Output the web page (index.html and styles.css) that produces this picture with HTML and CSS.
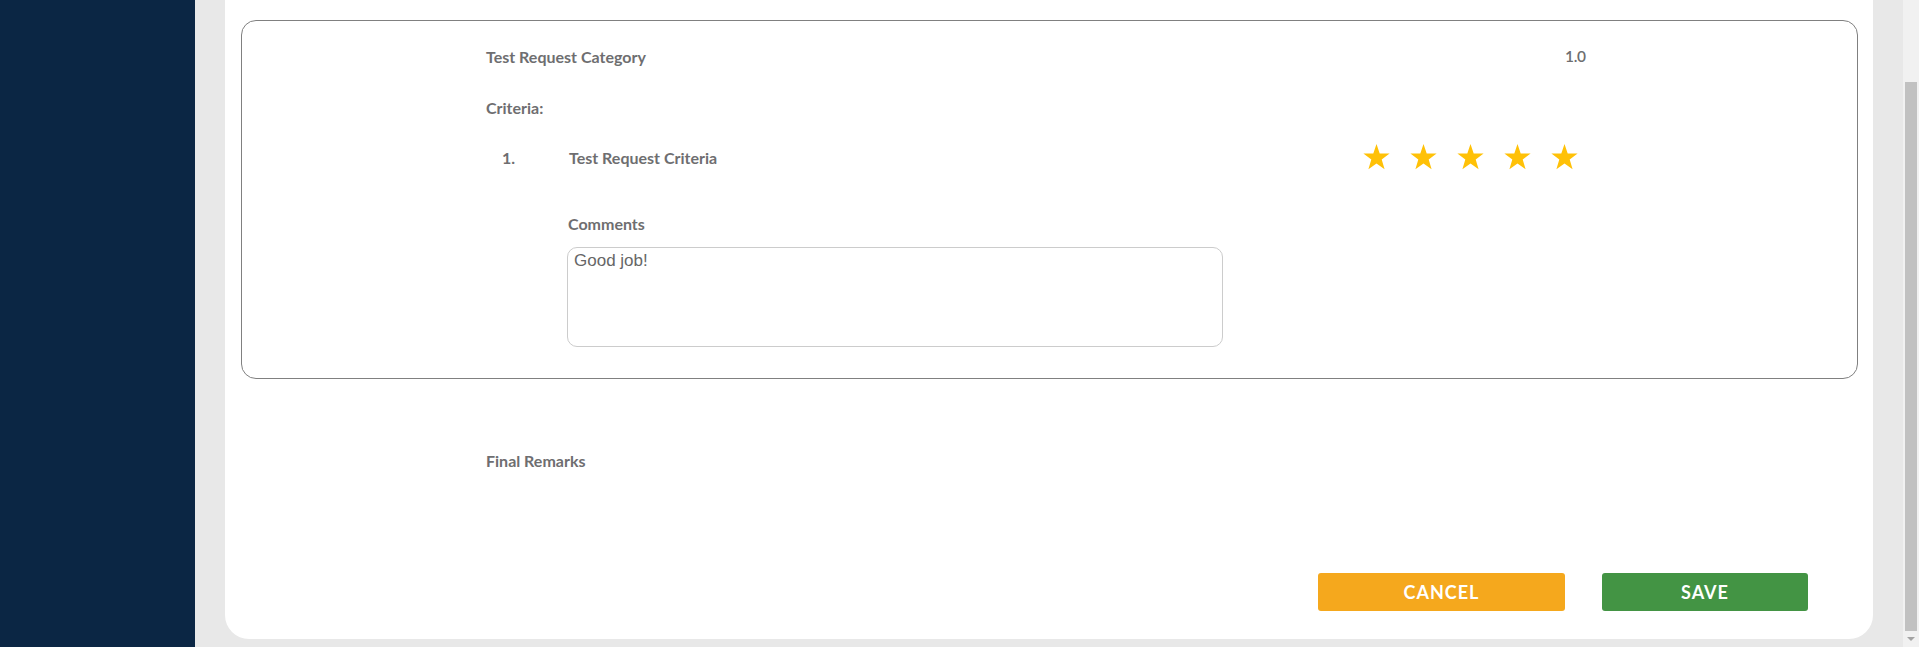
FILE: index.html
```html
<!DOCTYPE html>
<html lang="en">
<head>
<meta charset="utf-8">
<title>Evaluation</title>
<link rel="stylesheet" href="styles.css">
</head>
<body>
<div class="app">
  <aside class="sidebar"></aside>
  <main class="main">
    <section class="card">
      <div class="box">
        <div class="cat-row">
          <span class="cat-label">Test Request Category</span>
          <span class="cat-value">1.0</span>
        </div>
        <div class="crit-heading">Criteria:</div>
        <div class="crit-row">
          <span class="crit-num">1.</span>
          <span class="crit-title">Test Request Criteria</span>
          <div class="stars">
            <svg class="star" viewBox="0 0 27 26"><polygon points="13.5,0 16.7,9.4 26.6,9.6 18.7,15.6 21.6,25.2 13.5,19.4 5.4,25.2 8.3,15.6 0.4,9.6 10.3,9.4"/></svg>
            <svg class="star" viewBox="0 0 27 26"><polygon points="13.5,0 16.7,9.4 26.6,9.6 18.7,15.6 21.6,25.2 13.5,19.4 5.4,25.2 8.3,15.6 0.4,9.6 10.3,9.4"/></svg>
            <svg class="star" viewBox="0 0 27 26"><polygon points="13.5,0 16.7,9.4 26.6,9.6 18.7,15.6 21.6,25.2 13.5,19.4 5.4,25.2 8.3,15.6 0.4,9.6 10.3,9.4"/></svg>
            <svg class="star" viewBox="0 0 27 26"><polygon points="13.5,0 16.7,9.4 26.6,9.6 18.7,15.6 21.6,25.2 13.5,19.4 5.4,25.2 8.3,15.6 0.4,9.6 10.3,9.4"/></svg>
            <svg class="star" viewBox="0 0 27 26"><polygon points="13.5,0 16.7,9.4 26.6,9.6 18.7,15.6 21.6,25.2 13.5,19.4 5.4,25.2 8.3,15.6 0.4,9.6 10.3,9.4"/></svg>
          </div>
        </div>
        <div class="comments">
          <label class="comments-label" for="c1">Comments</label>
          <textarea id="c1" class="comments-input">Good job!</textarea>
        </div>
      </div>
      <div class="final-label">Final Remarks</div>
      <div class="actions">
        <button class="btn btn-cancel">CANCEL</button>
        <button class="btn btn-save">SAVE</button>
      </div>
    </section>
  </main>
  <div class="scrollbar">
    <div class="scroll-track"><div class="scroll-thumb"></div></div>
    <div class="scroll-arrow"></div>
  </div>
</div>
</body>
</html>
```

FILE: styles.css
```css
* { box-sizing: border-box; }
html, body { margin: 0; padding: 0; }
body {
  font-family: "Lato", "Noto Sans", sans-serif;
  color: #6e6e70;
  overflow: hidden;
}
.app {
  display: flex;
  height: 647px;
}
.sidebar {
  width: 195px;
  flex: none;
  background: #0b2644;
}
.main {
  flex: 1;
  background: #e8e8e8;
  padding: 0 30px 8px 30px;
}
.card {
  background: #ffffff;
  height: 639px;
  border-radius: 0 0 24px 24px;
  padding: 20px 15px 28px 16px;
  display: flex;
  flex-direction: column;
}
.box {
  height: 359px;
  border: 1px solid #808080;
  border-radius: 15px;
  padding: 25px 0 0 244px;
}
.label-text {
  font-size: 16px;
}
.cat-row {
  display: flex;
  height: 20px;
  align-items: center;
  font-size: 16px;
  font-weight: 700;
}
.cat-label { width: 1079px; }
.cat-value { font-weight: 600; font-size: 15.5px; letter-spacing: -0.3px; }
.crit-heading {
  margin-top: 32px;
  height: 20px;
  line-height: 20px;
  font-size: 16px;
  font-weight: 700;
}
.crit-row {
  margin-top: 26px;
  display: flex;
  align-items: center;
  height: 26px;
  font-size: 16px;
  font-weight: 700;
}
.crit-num { width: 83px; padding-left: 16px; }
.crit-title { width: 794px; }
.stars { display: flex; gap: 20px; }
.star { width: 27px; height: 26px; fill: #ffc107; display: block; }
.comments {
  margin-top: 44px;
  margin-left: 81px;
  display: flex;
  flex-direction: column;
}
.comments-label {
  height: 20px;
  line-height: 20px;
  font-size: 16px;
  font-weight: 700;
  margin-left: 1px;
}
.comments-input {
  margin-top: 13px;
  width: 656px;
  height: 100px;
  border: 1px solid #cccccc;
  border-radius: 10px;
  padding: 3px 6px;
  font-family: "Liberation Sans", Arial, sans-serif;
  font-size: 17px;
  color: #666666;
  resize: none;
  outline: none;
}
.final-label {
  margin-top: 72px;
  margin-left: 245px;
  height: 20px;
  line-height: 20px;
  font-size: 16px;
  font-weight: 700;
}
.actions {
  margin-top: auto;
  display: flex;
  justify-content: flex-end;
  gap: 37px;
  padding-right: 50px;
}
.btn {
  height: 38px;
  border: none;
  border-radius: 3px;
  color: #ffffff;
  font-family: "Lato", "Noto Sans", sans-serif;
  font-weight: 700;
  font-size: 18px;
  letter-spacing: 1px;
  padding: 0;
}
.btn-cancel { width: 247px; background: #f5a81d; }
.btn-save { width: 206px; background: #439444; }
.scrollbar {
  width: 16px;
  flex: none;
  background: #f1f1f1;
  display: flex;
  flex-direction: column;
}
.scroll-track {
  flex: 1;
  padding: 82px 2px 0 2px;
  display: flex;
}
.scroll-thumb {
  flex: 1;
  background: #c1c1c1;
}
.scroll-arrow {
  height: 16px;
  display: flex;
  justify-content: center;
  align-items: center;
}
.scroll-arrow::before {
  content: "";
  border-left: 4px solid transparent;
  border-right: 4px solid transparent;
  border-top: 4px solid #a3a3a3;
}
```
